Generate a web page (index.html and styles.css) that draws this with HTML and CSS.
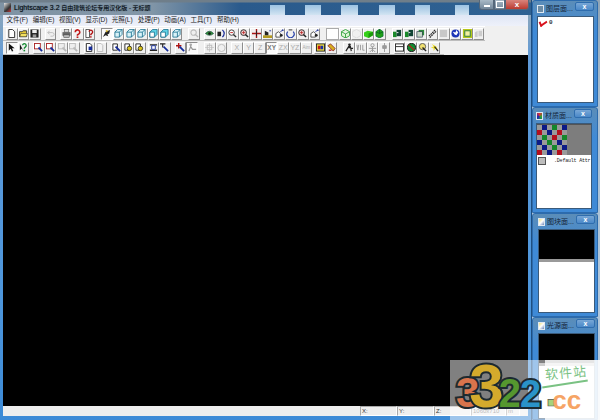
FILE: index.html
```html
<!DOCTYPE html>
<html lang="zh">
<head>
<meta charset="utf-8">
<title>Lightscape 3.2</title>
<link rel="stylesheet" href="styles.css">
</head>
<body>
<svg class="defs" width="0" height="0" aria-hidden="true">
  <symbol id="doc" viewBox="0 0 10 10"><path d="M2 .5h4l2.500 2.500v6.500h-6.500z" fill="#fff" stroke="#222"/></symbol>
  <symbol id="folder" viewBox="0 0 10 10"><path d="M.5 3h3l1-1h4v6.500h-8z" fill="#e8c832" stroke="#333"/><path d="M2 5h7.500l-1.500 3.500h-7z" fill="#f3e060" stroke="#333" stroke-width=".6"/></symbol>
  <symbol id="disk" viewBox="0 0 10 10"><rect x=".5" y=".5" width="9" height="9" fill="#222"/><rect x="2.500" y="1" width="5" height="3.500" fill="#eee"/><rect x="3" y="6" width="4" height="3.500" fill="#999"/></symbol>
  <symbol id="undo" viewBox="0 0 10 10"><path d="M2 4h5a2 2 0 0 1 0 4h-2M4 2l-2 2 2 2" fill="none" stroke="#bbb"/></symbol>
  <symbol id="print" viewBox="0 0 10 10"><rect x="2.500" y=".5" width="5" height="3" fill="#ddd" stroke="#555" stroke-width=".7"/><rect x=".5" y="3.500" width="9" height="4" fill="#666"/><rect x="2" y="6.500" width="6" height="3" fill="#bbb" stroke="#444" stroke-width=".6"/></symbol>
  <symbol id="help" viewBox="0 0 10 10"><path d="M2.500 3.500a2.500 2.500 0 1 1 4 2l-1.500 1v1" fill="none" stroke="#c01818" stroke-width="1.800"/><rect x="4" y="8.300" width="2" height="1.700" fill="#c01818"/></symbol>
  <symbol id="help2" viewBox="0 0 10 10"><path d="M1 .5h4v9h-4z" fill="#fff" stroke="#222" stroke-width=".8"/><path d="M4.500 3a2 2 0 1 1 3 2l-1 1v1" fill="none" stroke="#b01010" stroke-width="1.500"/><rect x="5.700" y="8" width="1.600" height="1.600" fill="#b01010"/></symbol>
  <symbol id="fly" viewBox="0 0 10 10"><path d="M1 9l3-6 5-2-1 4-2 1 1 2-3-1z" fill="#222"/><path d="M4 1l3 1-2 2z" fill="#d6b020"/></symbol>
  <symbol id="cube" viewBox="0 0 10 10"><path d="M1 3.500l3-3h5v5.500l-3 3h-5zM1 3.500h5v5.500M6 3.500l3-3" fill="#d9f2f8" stroke="#176f8e" stroke-width=".9"/></symbol>
  <symbol id="cubec" viewBox="0 0 10 10"><path d="M1 3.500l3-3h5v5.500l-3 3h-5z" fill="#5fd3e6" stroke="#176f8e" stroke-width=".9"/><path d="M1 3.500h5v5.500h-5z" fill="#fff" stroke="#176f8e" stroke-width=".9"/></symbol>
  <symbol id="grey" viewBox="0 0 10 10"><circle cx="4" cy="4" r="3" fill="none" stroke="#bbb" stroke-width="1.200"/><path d="M6 6l3 3" stroke="#bbb" stroke-width="1.500"/></symbol>
  <symbol id="eye" viewBox="0 0 10 10"><path d="M.5 5q4.500-5 9 0q-4.500 4-9 0z" fill="#2f8f3a" stroke="#143" stroke-width=".7"/><circle cx="5" cy="5" r="1.400" fill="#111"/></symbol>
  <symbol id="orbit" viewBox="0 0 10 10"><path d="M6 1q4 4 0 8" fill="none" stroke="#1b2f9a" stroke-width="1.300"/><path d="M.5 3h4v5h-4z" fill="#222"/></symbol>
  <symbol id="mag" viewBox="0 0 10 10"><circle cx="4" cy="4" r="3" fill="#fff" stroke="#333"/><path d="M6 6l3 3" stroke="#333" stroke-width="1.500"/><path d="M2.500 4h3" stroke="#c01818"/></symbol>
  <symbol id="mag2" viewBox="0 0 10 10"><circle cx="4" cy="4" r="3.200" fill="#f6d8d8" stroke="#222"/><path d="M6 6l3 3" stroke="#222" stroke-width="1.600"/><path d="M2 4h4M4 2v4" stroke="#b01818" stroke-width=".8"/></symbol>
  <symbol id="cross" viewBox="0 0 10 10"><path d="M0 5h10M5 0v10" stroke="#a81515" stroke-width="1.500"/><path d="M5 2v6" stroke="#222"/></symbol>
  <symbol id="house" viewBox="0 0 10 10"><rect x="0" y="7" width="10" height="3" fill="#b49a20"/><path d="M2 7v-5l4 2v3z" fill="#222"/><path d="M7 2h2" stroke="#1b2f9a"/></symbol>
  <symbol id="walk" viewBox="0 0 10 10"><path d="M1 9v-4l3-2 2 2v4z" fill="#fff" stroke="#222" stroke-width=".8"/><path d="M6 3l3-2M8 1h1v1" stroke="#1b2f9a"/><circle cx="7" cy="7" r="1.500" fill="#222"/></symbol>
  <symbol id="ring" viewBox="0 0 10 10"><path d="M2 3a4 4 0 1 0 6 0" fill="none" stroke="#2540a8" stroke-width="1.300"/><path d="M3 1h4" stroke="#222"/></symbol>
  <symbol id="wire" viewBox="0 0 10 10"><path d="M5 .5l4.500 2.500v4.500l-4.500 2.500-4.500-2.500v-4.500zM.5 3l4.500 2.500 4.500-2.500M5 5.500v4.500" fill="#dff5d5" stroke="#2fa23a"/></symbol>
  <symbol id="wireg" viewBox="0 0 10 10"><path d="M5 .5l4.500 2.500v4.500l-4.500 2.500-4.500-2.500v-4.500z" fill="none" stroke="#ddd"/></symbol>
  <symbol id="gcube" viewBox="0 0 10 10"><path d="M0 4l4-2 6 1v4l-5 3-5-2z" fill="#35d018"/><path d="M5 5v5l5-3v-4z" fill="#1d9a0c"/></symbol>
  <symbol id="gcube2" viewBox="0 0 10 10"><path d="M1 3l4-3 4 3v5l-4 2-4-2z" fill="#20a018" stroke="#063" stroke-width=".7"/><path d="M5 0v5M1 3l4 2 4-2" stroke="#052" fill="none" stroke-width=".7"/></symbol>
  <symbol id="pair" viewBox="0 0 10 10"><path d="M0 3h4v6h-4z" fill="#1a8a2a"/><path d="M4 1h5v7h-5z" fill="#143"/><path d="M4 4h2" stroke="#fff"/></symbol>
  <symbol id="stack" viewBox="0 0 10 10"><rect x="3" y="1" width="6" height="6" fill="#2b8a3a"/><rect x="1" y="3" width="6" height="6" fill="#c8d8c8" stroke="#234" stroke-width=".7"/></symbol>
  <symbol id="slash" viewBox="0 0 10 10"><path d="M1 8l7-7M2 9.500l7-7" stroke="#222" stroke-width="1.200" stroke-dasharray="2 .6"/></symbol>
  <symbol id="gsq" viewBox="0 0 10 10"><rect x="1" y="1" width="8" height="8" fill="#c8c8c8"/></symbol>
  <symbol id="globe" viewBox="0 0 10 10"><circle cx="5" cy="5" r="4.500" fill="#1c35b8"/><path d="M2 3l3 1 1-3 2 3-2 3-2-1z" fill="#fff"/></symbol>
  <symbol id="yel" viewBox="0 0 10 10"><rect x="0" y="0" width="10" height="10" fill="#b8c81a"/><rect x="2" y="2" width="6" height="6" fill="#f4f0a0" stroke="#274" /></symbol>
  <symbol id="gs" viewBox="0 0 10 10"><path d="M1 9v-5l3-2v7zM5 8v-6h4v6z" fill="#ccc"/></symbol>
  <symbol id="arrow" viewBox="0 0 10 10"><path d="M2 .5v8l2-2 1.500 3 1.500-.7-1.500-3h3z" fill="#111"/></symbol>
  <symbol id="qarrow" viewBox="0 0 10 10"><path d="M1 1v7l2-2 2 3" fill="#111"/><path d="M4 2.500a2 2 0 1 1 3 2l-1 1v1" fill="none" stroke="#138a30" stroke-width="1.500"/><rect x="5" y="7.500" width="1.800" height="1.800" fill="#138a30"/></symbol>
  <symbol id="sel" viewBox="0 0 10 10"><rect x=".5" y=".5" width="6.500" height="6" fill="#fff" stroke="#a82020"/><path d="M5 5l4 4" stroke="#152c9a" stroke-width="2"/></symbol>
  <symbol id="selg" viewBox="0 0 10 10"><rect x=".5" y=".5" width="6.500" height="6" fill="#eee" stroke="#bbb"/><path d="M5 5l4 4" stroke="#bbb" stroke-width="2"/></symbol>
  <symbol id="dbox" viewBox="0 0 10 10"><path d="M1.500 .5h4l2 2v7h-6z" fill="#fff" stroke="#222"/><path d="M4 4h4v4h-4z" fill="#152c9a"/></symbol>
  <symbol id="dboxg" viewBox="0 0 10 10"><path d="M1.500 .5h4l2 2v7h-6z" fill="#f4f4f4" stroke="#bbb"/></symbol>
  <symbol id="tbox" viewBox="0 0 10 10"><path d="M1 1h5v7h-5z" fill="#fff" stroke="#222"/><path d="M4 4l5 5" stroke="#152c9a" stroke-width="2"/></symbol>
  <symbol id="lamp" viewBox="0 0 10 10"><path d="M1 1h5v7h-5z" fill="#fff" stroke="#222"/><circle cx="6" cy="6" r="2.500" fill="#d8c018" stroke="#111" stroke-width=".8"/></symbol>
  <symbol id="bars" viewBox="0 0 10 10"><path d="M1 2h8M1 8h8" stroke="#222" stroke-width="1.500"/><path d="M3 3h4v4h-4z" fill="#fff" stroke="#152c9a"/></symbol>
  <symbol id="tt" viewBox="0 0 10 10"><path d="M0 1h6M3 1v4" stroke="#222" stroke-width="1.300"/><path d="M4 4l5 5" stroke="#152c9a" stroke-width="1.800"/></symbol>
  <symbol id="plus" viewBox="0 0 10 10"><path d="M0 3h6M3 0v6" stroke="#b01515" stroke-width="1.500"/><path d="M4 4l5 5" stroke="#152c9a" stroke-width="2"/></symbol>
  <symbol id="guy" viewBox="0 0 10 10"><circle cx="3" cy="2" r="1.500" fill="#aaa"/><path d="M1 9l2-5 2 3h4" fill="none" stroke="#999" stroke-width="1.300"/></symbol>
  <symbol id="move" viewBox="0 0 10 10"><path d="M5 0v10M0 5h10" stroke="#ccc"/><rect x="2.500" y="2.500" width="5" height="5" fill="none" stroke="#bbb"/></symbol>
  <symbol id="rot" viewBox="0 0 10 10"><circle cx="5" cy="5.500" r="4" fill="none" stroke="#bbb"/></symbol>
  <symbol id="pal" viewBox="0 0 10 10"><rect x=".5" y="1" width="9" height="8" fill="#f0e040" stroke="#222"/><rect x="2" y="3" width="3" height="4" fill="#c01818"/><rect x="5" y="3" width="3" height="4" fill="#1a2ea0"/></symbol>
  <symbol id="brush" viewBox="0 0 10 10"><path d="M1 3l3-2 5 5-2 3z" fill="#d8b020" stroke="#7a1010" stroke-width=".8"/><path d="M2 8h3" stroke="#b01515" stroke-width="1.400"/></symbol>
  <symbol id="man" viewBox="0 0 10 10"><circle cx="5" cy="2" r="1.500" fill="#222"/><path d="M1 9l3-5h2l1 5M4 5l5 1" fill="none" stroke="#222" stroke-width="1.300"/></symbol>
  <symbol id="vbl" viewBox="0 0 10 10"><path d="M1 2l1 6 1-6M5 2v6M7.500 2v6h2" fill="none" stroke="#999"/></symbol>
  <symbol id="star" viewBox="0 0 10 10"><circle cx="5" cy="2.500" r="1.800" fill="none" stroke="#999"/><path d="M1 6h8M5 4v6M2 10l3-3 3 3" fill="none" stroke="#999"/></symbol>
  <symbol id="pin" viewBox="0 0 10 10"><path d="M5 0v10M3 3h4v3h-4z" fill="#999" stroke="#999"/></symbol>
  <symbol id="frame" viewBox="0 0 10 10"><rect x=".5" y="1" width="9" height="8" fill="#fff" stroke="#222"/><path d="M1 4h8" stroke="#222"/></symbol>
  <symbol id="clock" viewBox="0 0 10 10"><circle cx="5" cy="5" r="4.500" fill="#128a30" stroke="#111"/><path d="M2 2l6 6" stroke="#c01818" stroke-width="1.300"/></symbol>
  <symbol id="ygear" viewBox="0 0 10 10"><circle cx="5" cy="4" r="3.500" fill="#f0e070" stroke="#555"/><path d="M5 5l4 4" stroke="#222" stroke-width="1.500"/></symbol>
  <symbol id="ystar" viewBox="0 0 10 10"><path d="M2 1l2 3-3 1 3 1v3l2-3 3 2-2-4z" fill="#f0e030"/><path d="M5 4l4 5" stroke="#222" stroke-width="1.400"/></symbol>
</svg>

<div class="screen">
  <main class="window">
    <header class="titlebar">
      <span class="app-icon"></span>
      <span class="title-text"><span class="title-latin">Lightscape 3.2</span> 自由建筑论坛专用汉化版 - 无标题</span>
      <div class="caption">
        <span class="cap cap-min"></span>
        <span class="cap cap-max"></span>
        <span class="cap cap-close">x</span>
      </div>
    </header>
    <div class="client">
      <nav class="menubar">
        <span>文件(F)</span><span>编辑(E)</span><span>视图(V)</span><span>显示(D)</span><span>光照(L)</span><span>处理(P)</span><span>动画(A)</span><span>工具(T)</span><span>帮助(H)</span>
      </nav>
      <div class="toolrow row-one">
        <span class="tb"><svg><use href="#doc"/></svg></span><span class="tb"><svg><use href="#folder"/></svg></span><span class="tb"><svg><use href="#disk"/></svg></span>
        <span class="tb g1"><svg><use href="#undo"/></svg></span>
        <span class="tb g1"><svg><use href="#print"/></svg></span><span class="tb"><svg><use href="#help"/></svg></span><span class="tb"><svg><use href="#help2"/></svg></span>
        <span class="tb g2 on"><svg><use href="#fly"/></svg></span><span class="tb"><svg><use href="#cube"/></svg></span><span class="tb"><svg><use href="#cube"/></svg></span><span class="tb"><svg><use href="#cube"/></svg></span><span class="tb"><svg><use href="#cubec"/></svg></span><span class="tb"><svg><use href="#cubec"/></svg></span><span class="tb"><svg><use href="#cube"/></svg></span>
        <span class="tb g2"><svg><use href="#grey"/></svg></span>
        <span class="tb g1"><svg><use href="#eye"/></svg></span><span class="tb"><svg><use href="#orbit"/></svg></span><span class="tb"><svg><use href="#mag"/></svg></span><span class="tb"><svg><use href="#mag2"/></svg></span><span class="tb"><svg><use href="#cross"/></svg></span><span class="tb"><svg><use href="#house"/></svg></span><span class="tb"><svg><use href="#walk"/></svg></span><span class="tb"><svg><use href="#ring"/></svg></span>
        <span class="tb g0"><svg><use href="#mag2"/></svg></span><span class="tb"><svg><use href="#walk"/></svg></span>
        <span class="tb g2 blank"></span><span class="tb"><svg><use href="#wire"/></svg></span><span class="tb"><svg><use href="#wireg"/></svg></span><span class="tb"><svg><use href="#gcube"/></svg></span><span class="tb"><svg><use href="#gcube2"/></svg></span>
        <span class="tb g2"><svg><use href="#pair"/></svg></span><span class="tb"><svg><use href="#pair"/></svg></span><span class="tb"><svg><use href="#stack"/></svg></span><span class="tb"><svg><use href="#slash"/></svg></span><span class="tb"><svg><use href="#gsq"/></svg></span><span class="tb"><svg><use href="#globe"/></svg></span><span class="tb"><svg><use href="#yel"/></svg></span><span class="tb"><svg><use href="#gs"/></svg></span>
      </div>
      <div class="toolrow row-two">
        <span class="tb on"><svg><use href="#arrow"/></svg></span><span class="tb"><svg><use href="#qarrow"/></svg></span>
        <span class="tb g1"><svg><use href="#sel"/></svg></span><span class="tb"><svg><use href="#sel"/></svg></span><span class="tb"><svg><use href="#selg"/></svg></span><span class="tb"><svg><use href="#selg"/></svg></span>
        <span class="tb g1"><svg><use href="#dbox"/></svg></span><span class="tb"><svg><use href="#dboxg"/></svg></span>
        <span class="tb g1"><svg><use href="#tbox"/></svg></span><span class="tb"><svg><use href="#lamp"/></svg></span><span class="tb"><svg><use href="#lamp"/></svg></span>
        <span class="tb gs"><svg><use href="#bars"/></svg></span><span class="tb"><svg><use href="#tt"/></svg></span>
        <span class="tb g1"><svg><use href="#plus"/></svg></span><span class="tb on"><svg><use href="#guy"/></svg></span>
        <span class="tb g2"><svg><use href="#move"/></svg></span><span class="tb"><svg><use href="#rot"/></svg></span>
        <span class="tb g1 txt">X</span><span class="tb txt">Y</span><span class="tb txt">Z</span><span class="tb txt dark on">XY</span><span class="tb txt">ZX</span><span class="tb txt">YZ</span><span class="tb txt tiny">Aim</span>
        <span class="tb gs"><svg><use href="#pal"/></svg></span><span class="tb"><svg><use href="#brush"/></svg></span>
        <span class="tb g2"><svg><use href="#man"/></svg></span><span class="tb"><svg><use href="#vbl"/></svg></span><span class="tb"><svg><use href="#star"/></svg></span><span class="tb"><svg><use href="#pin"/></svg></span>
        <span class="tb g1"><svg><use href="#frame"/></svg></span><span class="tb"><svg><use href="#clock"/></svg></span><span class="tb"><svg><use href="#ygear"/></svg></span><span class="tb"><svg><use href="#ystar"/></svg></span>
      </div>
      <div class="viewport"></div>
      <footer class="statusbar">
        <span class="field">X:</span><span class="field">Y:</span><span class="field">Z:</span><span class="field plain">1060x710</span><span class="field unit">m</span>
      </footer>
    </div>
  </main>

  <aside class="panels">
    <section class="panel p-layer">
      <header class="ptitle"><span class="picon i-layer"></span><span class="ptext">图层面...</span><span class="pclose">x</span></header>
      <div class="pbody layer-list"><span class="check"></span><span class="layer-name">0</span></div>
    </section>
    <section class="panel p-mat">
      <header class="ptitle"><span class="picon i-mat"></span><span class="ptext">材质面...</span><span class="pclose">x</span></header>
      <div class="pbody mat-body">
        <div class="mat-top">
          <svg class="mat-grid" viewBox="0 0 30 30">
            <defs>
              <pattern id="checks" width="20" height="20" patternUnits="userSpaceOnUse">
                <rect width="20" height="20" fill="#9a9a9a"/>
                <rect x="5" y="0" width="5" height="5" fill="#0c1a86"/><rect x="15" y="0" width="5" height="5" fill="#14862a"/>
                <rect x="0" y="5" width="5" height="5" fill="#b3101f"/><rect x="10" y="5" width="5" height="5" fill="#0c1a86"/>
                <rect x="5" y="10" width="5" height="5" fill="#14862a"/><rect x="15" y="10" width="5" height="5" fill="#b3101f"/>
                <rect x="0" y="15" width="5" height="5" fill="#0c1a86"/><rect x="10" y="15" width="5" height="5" fill="#14862a"/>
              </pattern>
            </defs>
            <rect width="30" height="30" fill="url(#checks)"/>
          </svg>
        </div>
        <div class="mat-row"><span class="mat-swatch"></span><span class="mat-name">.Default Attr</span></div>
      </div>
    </section>
    <section class="panel p-block">
      <header class="ptitle"><span class="picon i-block"></span><span class="ptext">图块面...</span><span class="pclose">x</span></header>
      <div class="pbody split"><div class="preview"></div></div>
    </section>
    <section class="panel p-light">
      <header class="ptitle"><span class="picon i-block"></span><span class="ptext">光源面...</span><span class="pclose">x</span></header>
      <div class="pbody split"><div class="preview short"></div></div>
    </section>
  </aside>

  <div class="watermark">
    <div class="logo"><span class="d1">3</span><span class="d2">3</span><span class="d3">2</span><span class="d4">2</span></div>
    <div class="brand">
      <span class="brand-cn">软件站</span>
      <span class="swoosh"></span>
      <span class="brand-cc"><span class="dot">.</span>cc</span>
    </div>
  </div>
</div>
</body>
</html>
```

FILE: styles.css
```css
* { box-sizing: border-box; }
html, body { margin: 0; padding: 0; }
body { width: 600px; height: 420px; overflow: hidden; font-family: "Liberation Sans", "Noto Sans CJK SC", sans-serif; }
.defs { position: absolute; }

.screen { position: relative; display: flex; width: 600px; height: 420px; overflow: hidden; background: linear-gradient(180deg, #8fa4b6 0, #a9bfd2 100px, #b5cbe0 100%); }

.window { display: flex; flex-direction: column; flex: none; width: 532px; height: 420px; padding: 0 3px 4px 3px; background: linear-gradient(180deg, #5f7d95 0, #8aa6bc 14px, #5f9ad8 60px, #4d96dc 300px, #3c8ad6 100%); border-right: 1px solid #1f4f80; }

.titlebar { display: flex; align-items: center; height: 15px; flex: none; gap: 2px; margin: 0 -3px; padding-left: 4px; background-color: #2a5a8c; background-repeat: no-repeat; background-image:
  linear-gradient(180deg, #6f7e8a 0, #6f7e8a 2px, transparent 3px),
  linear-gradient(#9cc2e2, #d2e4f2), linear-gradient(#9cc2e2, #d2e4f2), linear-gradient(#9cc2e2, #d2e4f2), linear-gradient(#9cc2e2, #d2e4f2), linear-gradient(#9cc2e2, #d2e4f2), linear-gradient(#9cc2e2, #d2e4f2),
  linear-gradient(90deg, #7f93a4 0, #8397a8 150px, #2a5a8c 240px, #2f6293 100%);
  background-size: 100% 100%, 15px 10px, 16px 10px, 17px 10px, 16px 10px, 15px 10px, 14px 10px, 100% 100%;
  background-position: 0 0, 270px 5px, 305px 5px, 341px 5px, 379px 5px, 415px 5px, 455px 5px, 0 0; }
.app-icon { width: 7px; height: 9px; background: linear-gradient(135deg, #e8e8e8, #333 60%, #c33); }
.title-text { margin-left: 1px; font-size: 6px; line-height: 15px; color: #05090d; white-space: nowrap; text-shadow: 0 0 1px #33475a; }
.title-latin { font-size: 7px; }
.caption { display: flex; align-self: flex-start; margin-left: auto; height: 10px; margin-right: 2px; }
.cap { display: flex; align-items: center; justify-content: center; height: 10px; border: 1px solid #55677a; border-top: 0; background: linear-gradient(180deg, #a9b9c6, #72879a); }
.cap-min { width: 15px; border-radius: 0 0 0 3px; }
.cap-min::after { content: ""; width: 6px; height: 2px; margin-top: 3px; background: #fff; }
.cap-max { width: 11px; }
.cap-max::after { content: ""; width: 6px; height: 5px; border: 1px solid #fff; }
.cap-close { width: 24px; font-size: 8px; font-weight: bold; line-height: 8px; color: #fff; background: linear-gradient(180deg, #d9847c, #bb3b30); border-radius: 0 0 3px 0; }

.client { display: flex; flex-direction: column; flex: 1; min-height: 0; background: #f0f0f0; }
.menubar { display: flex; flex: none; gap: 7.300px; height: 11px; padding-left: 3.500px; font-size: 6.500px; line-height: 10px; color: #222; background: linear-gradient(180deg, #dfe6f5, #eef1fa); white-space: nowrap; }
.menubar span { width: 19px; }

.toolrow { display: flex; flex: none; align-items: center; height: 14px; padding-left: 3px; background: #f0f0f0; border-bottom: 1px solid #bdbdbd; }
.row-one { width: 482px; height: 15px; border-top: 1px solid #fff; }
.row-two { width: 441px; height: 14px; }
.tb { display: flex; align-items: center; justify-content: center; flex: none; width: 11.600px; height: 12px; background: #f0f0f0; border: 1px solid; border-color: #fff #8e8e8e #8e8e8e #fff; }
.tb svg { display: block; width: 9px; height: 9px; }
.tb.on { background: #fbfbfb; border-color: #8e8e8e #fff #fff #8e8e8e; }
.tb.blank { background: #fff; border-color: #aaa; width: 13px; }
.g0 { margin-left: .500px; }
.gs { margin-left: 2px; }
.g1 { margin-left: 4px; }
.g2 { margin-left: 6px; }
.txt { font-size: 7px; line-height: 10px; color: #aaa; }
.txt.dark { color: #777; font-weight: bold; font-size: 6.500px; }
.txt.tiny { font-size: 4.500px; }

.viewport { flex: 1; min-height: 0; background: #000; }
.statusbar { display: flex; flex: none; height: 10px; padding-left: 357px; background: #eeeeee; font-size: 6px; line-height: 9px; color: #333; }
.field { width: 37px; padding-left: 1px; border: 1px solid; border-color: #a9a9a9 #fff #fff #a9a9a9; }
.field.plain { width: 35px; color: #777; }
.field.unit { width: 14px; color: #777; }

.panels { display: flex; flex-direction: column; flex: none; width: 66px; height: 420px; }
.panel { display: flex; flex-direction: column; flex: none; background: linear-gradient(180deg, #5b8db8, #3f8ad6 30px); border: 1px solid #2c6bad; border-radius: 3px 3px 0 0; }
.p-layer { height: 107px; padding: 0 3px 3px 4px; }
.p-mat { height: 106px; padding: 0 5px 3px 3px; }
.p-block { height: 104px; padding: 0 2px 3px 5px; }
.p-light { height: 103px; padding: 0 2px 0 5px; }

.ptitle { display: flex; align-items: center; flex: none; height: 15px; gap: 2px; }
.picon { flex: none; width: 7px; height: 8px; border: 1px solid #dfe8f0; }
.i-layer { background: #6c8ca6; }
.i-mat { background: conic-gradient(#d33, #2a3, #22b, #d33); }
.i-block { background: linear-gradient(135deg, #f0e27a, #fff 50%, #6a84b8); }
.ptext { font-size: 7px; line-height: 10px; color: #14263a; white-space: nowrap; }
.pclose { display: flex; align-items: center; justify-content: center; margin-left: auto; width: 22px; height: 9px; align-self: flex-start; margin-top: 1px; font-size: 7px; line-height: 7px; font-weight: bold; color: #fff; background: linear-gradient(180deg, #78a7d6, #4a88c8); border: 1px solid #2f6dae; border-radius: 2px; }

.pbody { flex: 1; min-height: 0; background: #fff; border: 1px solid #3a5a7a; overflow: hidden; }
.layer-list { display: flex; align-items: flex-start; gap: 2px; padding: 2px 1px; }
.check { width: 8px; height: 5px; margin-top: 1px; border-left: 2.500px solid #d8121c; border-bottom: 2.500px solid #d8121c; transform: rotate(-35deg) skewX(-10deg); }
.layer-name { font-size: 6px; line-height: 7px; color: #333; font-family: "Liberation Mono", monospace; font-weight: bold; }

.mat-top { display: flex; height: 31px; background: #7d7d7d; border-top: 1px solid #555; }
.mat-grid { display: block; width: 30px; height: 30px; }
.mat-row { display: flex; align-items: center; gap: 8px; height: 11px; padding-left: 1px; }
.mat-swatch { flex: none; width: 8px; height: 8px; background: #bdbdbd; border: 1px solid #555; }
.mat-name { font-family: "Liberation Mono", monospace; font-size: 5px; line-height: 8px; letter-spacing: -.2px; color: #222; white-space: nowrap; }

.split { display: flex; flex-direction: column; }
.preview { flex: none; height: 32px; background: #000; border-bottom: 3px solid #9a9a9a; }

.watermark { position: absolute; left: 450px; top: 360px; display: flex; width: 150px; height: 60px; background: rgba(255, 255, 255, .5); }
.logo { display: flex; align-items: baseline; flex: none; width: 95px; padding: 4px 0 0 6px; font-family: "Liberation Sans", sans-serif; font-weight: bold; -webkit-text-stroke: 4px #1d2a30; }
.logo span { display: block; paint-order: stroke fill; }
.d1 { font-size: 42px; line-height: 30px; color: #d8744c; }
.d2 { font-size: 62px; line-height: 44px; color: #d4aa2c; margin-left: -10px; }
.d3 { font-size: 40px; line-height: 30px; color: #55972f; margin-left: -5px; }
.d4 { font-size: 38px; line-height: 30px; color: #2a93c8; margin-left: -1px; }
.brand { flex: 1; display: flex; flex-direction: column; background: rgba(255, 255, 255, .8); }
.brand-cn { margin-top: 5px; font-size: 13px; line-height: 15px; letter-spacing: 1px; color: #7ac283; white-space: nowrap; transform: rotate(-5deg); }
.swoosh { width: 46px; height: 2px; margin: 3px 0 0 -3px; background: #7ac283; transform: rotate(-9deg); }
.brand-cc { margin: 3px 0 0 0; font-size: 26px; line-height: 24px; font-weight: bold; color: #f6a465; white-space: nowrap; }
.dot { margin-right: -5px; font-size: 44px; line-height: 0; color: #a6d27a; vertical-align: 3px; -webkit-text-stroke: .7px #555; }
```
